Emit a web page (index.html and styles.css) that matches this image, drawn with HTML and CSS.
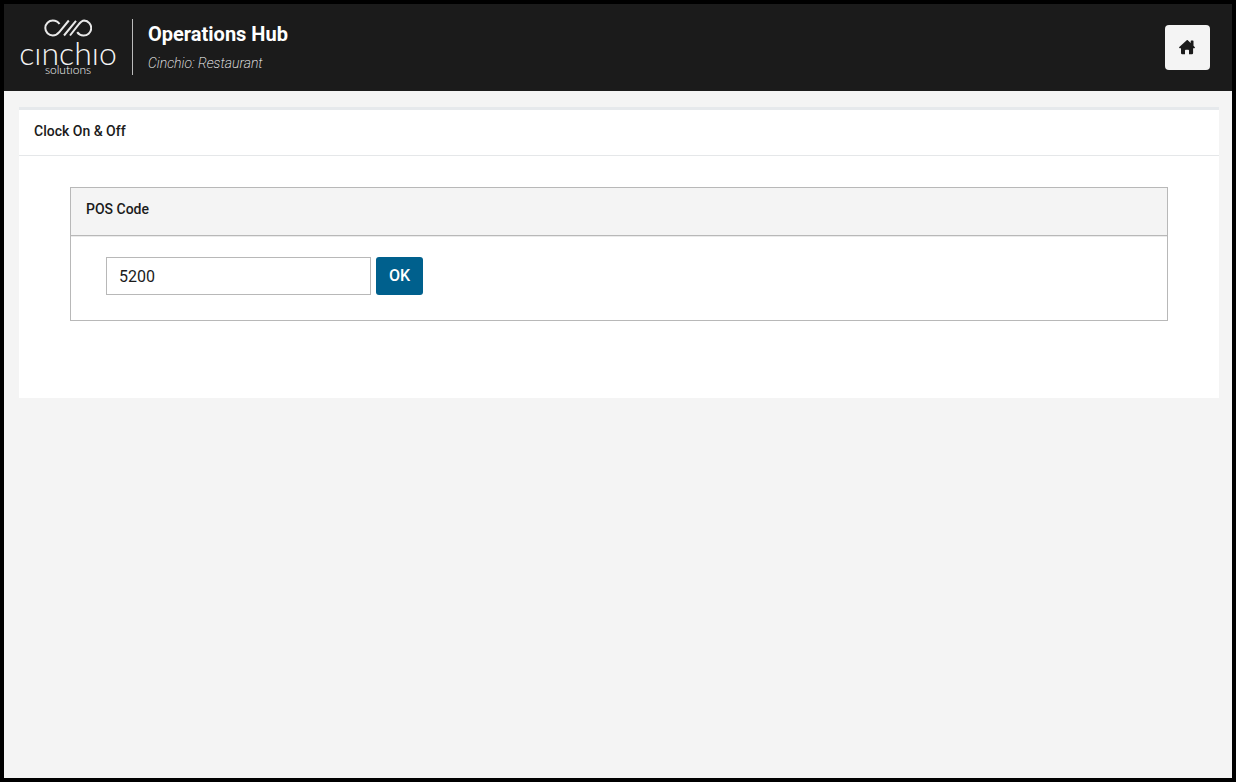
FILE: index.html
```html
<!DOCTYPE html>
<html lang="en">
<head>
<meta charset="utf-8">
<meta name="viewport" content="width=device-width, initial-scale=1">
<title>Operations Hub</title>
<link rel="stylesheet" href="styles.css">
</head>
<body>
<header class="topbar">
  <div class="brand">
    <svg class="brand-mark" viewBox="0 0 48 18" aria-hidden="true">
      <path d="M15.500 5C14 2.700 11.500 1.500 8.800 1.500a7.500 7.500 0 0 0 0 15c3 0 5-1.500 6.700-3.600L24.800 1.500M20 16.500L32 1.800M26 16.500L34.500 5.700C36.500 3 38.200 1.500 40.200 1.500a7.500 7.500 0 0 1-1 15c-2.500 0-4.500-1.200-6-3.300"/>
    </svg>
    <span class="brand-name">cınchıo</span>
    <span class="brand-sub">solutıons</span>
  </div>
  <div class="heading">
    <h1 class="title">Operations Hub</h1>
    <p class="subtitle">Cinchio: Restaurant</p>
  </div>
  <button class="home" type="button" aria-label="Home">
    <svg class="home-icon" viewBox="0 0 17 16" aria-hidden="true">
      <path d="M8 1L.300 8q-.6 1 .5 1.200H2V14q0 1.200 1.200 1.200H6V11.500q0-.8.8-.8h2.400q.8 0 .8.800v3.700h2.900q1.200 0 1.200-1.200V9.200h1.200q1-.2.400-1.200L14.500 6.800V2.200q0-.6-.6-.6H12.300q-.6 0-.6.600V4L8.500 1Q8.300.8 8 1z"/>
    </svg>
  </button>
</header>
<main class="panel">
  <h2 class="panel-title">Clock On &amp; Off</h2>
  <form class="card">
    <div class="card-head"><label for="pos-code">POS Code</label></div>
    <div class="card-body">
      <input class="code" id="pos-code" type="text" value="5200">
      <button class="ok" type="button">OK</button>
    </div>
  </form>
</main>
</body>
</html>
```

FILE: styles.css
```css
* {
  box-sizing: border-box;
}

body {
  margin: 0;
  min-height: 100vh;
  border: 4px solid #000;
  background: #f4f4f4;
  color: #1b1b1b;
  font-family: Roboto, sans-serif;
  font-size: 14px;
  line-height: 20px;
}

.topbar {
  display: flex;
  align-items: center;
  padding: 15px 22px 16px 16px;
  background: #1b1b1b;
  color: #fff;
}

.brand {
  display: flex;
  flex-direction: column;
  align-items: center;
  align-self: flex-start;
  width: 96px;
  color: #f4f4f4;
  font-family: Lato, sans-serif;
  font-variant-ligatures: none;
}

.brand-mark {
  width: 48px;
  height: 18px;
  fill: none;
  stroke: #e8e8e8;
  stroke-width: 2;
}

.brand-name {
  font-size: 32px;
  font-weight: 300;
  line-height: 32px;
}

.brand-sub {
  font-size: 12px;
  font-weight: 300;
  line-height: 2px;
}

.heading {
  flex: 1;
  margin-left: 16px;
  padding-left: 15px;
  border-left: 1px solid #bbb;
}

.title {
  margin: 0;
  font-size: 20px;
  font-weight: 700;
  line-height: 30px;
}

.subtitle {
  margin: 0;
  padding-top: 2px;
  font-size: 14px;
  font-style: italic;
  font-weight: 200;
  line-height: 24px;
}

.home {
  display: flex;
  align-items: center;
  justify-content: center;
  width: 45px;
  height: 45px;
  padding: 0;
  border: 0;
  border-radius: 4px;
  background: #f4f4f4;
}

.home-icon {
  width: 17px;
  height: 16px;
  fill: #1b1b1b;
}

.panel {
  margin: 16px 13px 0 15px;
  padding-bottom: 77px;
  border-top: 3px solid #e6e9ec;
  background: #fff;
}

.panel-title {
  margin: 0;
  padding: 11px 15px 14px;
  border-bottom: 1px solid #e5e7e9;
  font-size: 14px;
  font-weight: 500;
  line-height: 20px;
}

.card {
  margin: 31px 51px 0;
  border: 1px solid #b8b8b8;
}

.card-head {
  padding: 11px 15px 16px;
  border-bottom: 1px solid #b8b8b8;
  background: #f4f4f4;
  font-weight: 500;
}

.card-body {
  display: flex;
  gap: 5px;
  padding: 20px 35px 25px;
  border-top: 1px solid #ebebeb;
}

.code {
  width: 265px;
  height: 38px;
  padding: 0 12px;
  border: 1px solid #b8b8b8;
  background: #fff;
  color: #1b1b1b;
  font: 400 16px/24px Roboto, sans-serif;
}

.ok {
  height: 38px;
  padding: 0 13px;
  border: 0;
  border-radius: 3px;
  background: #00608d;
  color: #fff;
  font: 500 16px/24px Roboto, sans-serif;
}
```
